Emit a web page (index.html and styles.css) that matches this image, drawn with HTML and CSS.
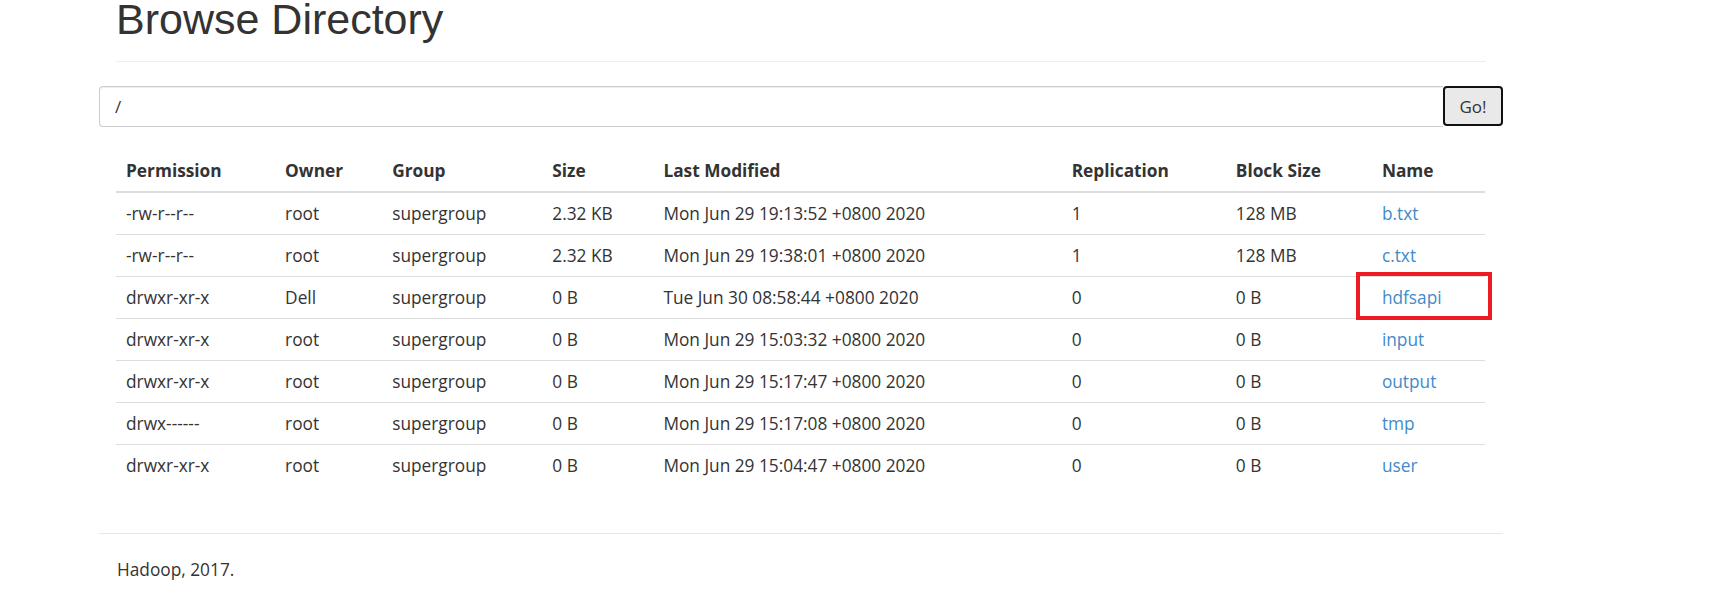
FILE: index.html
```html
<!DOCTYPE html>
<html lang="en">
<head>
    <meta charset="UTF-8">
    <meta name="viewport" content="width=device-width, initial-scale=1.0">
    <title>Browsing HDFS</title>
    <link rel="stylesheet" href="styles.css">
</head>
<body>
    <div class="container">
        <div class="page-header">
            <h1>Browse Directory</h1>
        </div>

        <form class="busca" onsubmit="return false;">
            <input class="caminho" type="text" value="/">
            <button class="go" type="submit">Go!</button>
        </form>

        <div class="lista">
            <table class="tabela">
                <colgroup>
                    <col style="width: 159px">
                    <col style="width: 107px">
                    <col style="width: 160px">
                    <col style="width: 111px">
                    <col style="width: 408px">
                    <col style="width: 164px">
                    <col style="width: 146px">
                    <col style="width: 113px">
                </colgroup>
                <thead>
                    <tr>
                        <th>Permission</th>
                        <th>Owner</th>
                        <th>Group</th>
                        <th>Size</th>
                        <th>Last Modified</th>
                        <th>Replication</th>
                        <th>Block Size</th>
                        <th>Name</th>
                    </tr>
                </thead>
                <tbody>
                    <tr>
                        <td>-rw-r--r--</td>
                        <td>root</td>
                        <td>supergroup</td>
                        <td>2.32 KB</td>
                        <td>Mon Jun 29 19:13:52 +0800 2020</td>
                        <td>1</td>
                        <td>128 MB</td>
                        <td><a href="#">b.txt</a></td>
                    </tr>
                    <tr>
                        <td>-rw-r--r--</td>
                        <td>root</td>
                        <td>supergroup</td>
                        <td>2.32 KB</td>
                        <td>Mon Jun 29 19:38:01 +0800 2020</td>
                        <td>1</td>
                        <td>128 MB</td>
                        <td><a href="#">c.txt</a></td>
                    </tr>
                    <tr>
                        <td>drwxr-xr-x</td>
                        <td>Dell</td>
                        <td>supergroup</td>
                        <td>0 B</td>
                        <td>Tue Jun 30 08:58:44 +0800 2020</td>
                        <td>0</td>
                        <td>0 B</td>
                        <td class="destaque"><a href="#">hdfsapi</a><span class="marca"></span></td>
                    </tr>
                    <tr>
                        <td>drwxr-xr-x</td>
                        <td>root</td>
                        <td>supergroup</td>
                        <td>0 B</td>
                        <td>Mon Jun 29 15:03:32 +0800 2020</td>
                        <td>0</td>
                        <td>0 B</td>
                        <td><a href="#">input</a></td>
                    </tr>
                    <tr>
                        <td>drwxr-xr-x</td>
                        <td>root</td>
                        <td>supergroup</td>
                        <td>0 B</td>
                        <td>Mon Jun 29 15:17:47 +0800 2020</td>
                        <td>0</td>
                        <td>0 B</td>
                        <td><a href="#">output</a></td>
                    </tr>
                    <tr>
                        <td>drwx------</td>
                        <td>root</td>
                        <td>supergroup</td>
                        <td>0 B</td>
                        <td>Mon Jun 29 15:17:08 +0800 2020</td>
                        <td>0</td>
                        <td>0 B</td>
                        <td><a href="#">tmp</a></td>
                    </tr>
                    <tr>
                        <td>drwxr-xr-x</td>
                        <td>root</td>
                        <td>supergroup</td>
                        <td>0 B</td>
                        <td>Mon Jun 29 15:04:47 +0800 2020</td>
                        <td>0</td>
                        <td>0 B</td>
                        <td><a href="#">user</a></td>
                    </tr>
                </tbody>
            </table>
        </div>

        <hr class="rodape-linha">
        <div class="rodape">Hadoop, 2017.</div>
    </div>
</body>
</html>
```

FILE: styles.css
```css
body {
    margin: 0;
    font-family: "Open Sans", "Noto Sans", sans-serif;
    font-size: 17.3px;
    color: #333;
    background-color: #fff;
}

.container {
    margin-left: 99px;
    width: 1404px;
}

.page-header {
    margin: -3px 17px 0;
    padding-bottom: 20px;
    border-bottom: 1px solid #eee;
}

.page-header h1 {
    margin: 0;
    font-family: "Liberation Sans", Arial, sans-serif;
    font-size: 43px;
    font-weight: normal;
    line-height: 44px;
    color: #333;
}

.busca {
    display: flex;
    margin-top: 24px;
}

.caminho {
    flex: 1;
    height: 41px;
    box-sizing: border-box;
    padding: 0 15px;
    border: 1px solid #ccc;
    border-radius: 4px 0 0 4px;
    border-right: none;
    box-shadow: inset 0 1px 1px rgba(0, 0, 0, 0.075);
    font-family: "Open Sans", "Noto Sans", sans-serif;
    font-size: 17px;
    color: #333;
    outline: none;
}

.go {
    width: 60px;
    height: 40px;
    box-sizing: border-box;
    border: 2px solid #111;
    border-radius: 4px;
    background-color: #e9e9e9;
    font-family: "Open Sans", "Noto Sans", sans-serif;
    font-size: 17px;
    color: #333;
    padding: 0;
    cursor: pointer;
}

.lista {
    padding: 0 17px;
    margin-top: 23px;
}

.tabela {
    width: 1369px;
    table-layout: fixed;
    border-collapse: collapse;
}

.tabela th,
.tabela td {
    text-align: left;
    padding: 0 10px;
    height: 41px;
    line-height: 41px;
    white-space: nowrap;
    vertical-align: top;
}

.tabela th {
    font-weight: bold;
    border-bottom: 2px solid #ddd;
}

.tabela tbody tr + tr td {
    border-top: 1px solid #ddd;
}

.tabela a {
    color: #428bca;
    text-decoration: none;
}

.destaque {
    position: relative;
}

.marca {
    position: absolute;
    top: -5px;
    left: -16px;
    width: 136px;
    height: 48px;
    box-sizing: border-box;
    border: 4px solid #ed1c24;
}

.rodape-linha {
    margin: 47px 0 0;
    border: 0;
    border-top: 1px solid #e8e8e8;
}

.rodape {
    padding: 24px 18px 0;
    line-height: 24px;
}
```
